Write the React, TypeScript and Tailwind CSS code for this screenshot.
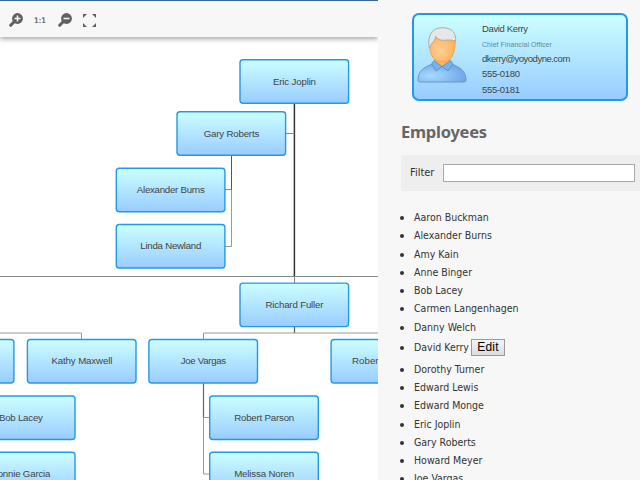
import React from "react";

type Person = { name: string; x: number; y: number; w: number };

const people: Person[] = [
  { name: "Eric Joplin", x: 240, y: 59.7, w: 43 },
  { name: "Gary Roberts", x: 177, y: 111.8, w: 55.5 },
  { name: "Alexander Burns", x: 116.3, y: 168.2, w: 68 },
  { name: "Linda Newland", x: 116.3, y: 224.5, w: 61 },
  { name: "Richard Fuller", x: 240, y: 283.1, w: 58 },
  { name: "", x: -94.7, y: 339.5, w: 0 },
  { name: "Kathy Maxwell", x: 27.4, y: 339.5, w: 61 },
  { name: "Joe Vargas", x: 148.9, y: 339.5, w: 45.5 },
  { name: "Robert Lorenzo", x: 331.1, y: 339.5, w: 67 },
  { name: "Bob Lacey", x: -33.6, y: 396, w: 44 },
  { name: "Bonnie Garcia", x: -33.6, y: 452.3, w: 59 },
  { name: "Robert Parson", x: 209.7, y: 396, w: 60 },
  { name: "Melissa Noren", x: 209.7, y: 452.3, w: 60 },
];

const edges: { d: string; c: string; w: number }[] = [
  { d: "M294.4 103V276.5", c: "#333", w: 1.5 },
  { d: "M294.5 276V283", c: "#888", w: 1 },
  { d: "M286 133.5H294.5", c: "#888", w: 1 },
  { d: "M231.5 155V190", c: "#555", w: 1 },
  { d: "M231.5 190V246.5H225", c: "#999", w: 1 },
  { d: "M225 189.5H231.5", c: "#888", w: 1 },
  { d: "M0 276.5H378", c: "#888", w: 1 },
  { d: "M294.5 327V333", c: "#555", w: 1.2 },
  { d: "M203.5 340V333H378", c: "#999", w: 1 },
  { d: "M0 333H81.5V340", c: "#999", w: 1 },
  { d: "M203.5 383V417.5", c: "#666", w: 1.2 },
  { d: "M203.5 417V474H210M203.5 417.5H210", c: "#999", w: 1 },
];

function Chart() {
  return (
    <svg width="378" height="480" className="block" fontFamily="'Liberation Sans', Arial, sans-serif">
      <defs>
        <linearGradient id="node" x2="0" y2="1">
          <stop stopColor="#ccffff" />
          <stop offset="1" stopColor="#99ccff" />
        </linearGradient>
      </defs>
      {edges.map((e) => (
        <path key={e.d} d={e.d} fill="none" stroke={e.c} strokeWidth={e.w} />
      ))}
      {people.map((p, i) => (
        <g key={i}>
          <rect x={p.x} y={p.y} width="108.6" height="43.5" rx="3" fill="url(#node)" stroke="#2299e8" strokeWidth="1.4" />
          {p.name && (
            <text x={p.x + 54.5} y={p.y + 24.9} fontSize="9.7" textAnchor="middle" textLength={p.w} fill="#444">
              {p.name}
            </text>
          )}
        </g>
      ))}
    </svg>
  );
}

function Zoom({ plus }: { plus?: boolean }) {
  return (
    <svg width="14" height="14" viewBox="0 0 14 14" className="block">
      <path d="M5.5 8.5 1.7 12.3" stroke="#606060" strokeWidth="3" strokeLinecap="round" />
      <circle cx="8.5" cy="5.5" r="5.4" fill="#606060" />
      <path d={plus ? "M5.5 5.5h6M8.5 2.5v6" : "M5.5 5.5h6"} stroke="#f5f5f5" strokeWidth="1.6" />
    </svg>
  );
}

function Toolbar() {
  return (
    <div className="absolute inset-x-0 top-0 flex h-[37px] items-start border-t border-[#336699] bg-[#f7f7f7] pl-[9px] pt-[12px] shadow-[0_2px_5px_rgba(0,0,0,0.35)]">
      <Zoom plus />
      <span className="ml-[11px] mt-[3px] w-[13px] whitespace-nowrap font-['DejaVu_Sans',sans-serif] text-[7.5px] leading-[10px] text-[#555] [-webkit-text-stroke:0.2px_#555]">1:1</span>
      <div className="ml-[11px]"><Zoom /></div>
      <svg width="13" height="13" viewBox="0 0 13 13" className="ml-[11px] mt-px" fill="#606060">
        <path d="M0 0h4L0 4zM9 0h4v4zM0 9v4h4zM13 9v4H9z" />
      </svg>
    </div>
  );
}

function Avatar() {
  return (
    <svg width="50" height="57" viewBox="0 0 50 57" className="block">
      <defs>
        <radialGradient id="face" cx=".42" cy=".6" r=".65">
          <stop stopColor="#ffd097" />
          <stop offset="1" stopColor="#ffad50" />
        </radialGradient>
        <radialGradient id="shirt" cx=".28" cy=".65" r=".75">
          <stop stopColor="#a6dcff" />
          <stop offset="1" stopColor="#6fa5e8" />
        </radialGradient>
      </defs>
      <path d="M1 53C1 45 6 40 16 37L25 39 34 37C44 40 49 45 49 53Q49 55 47 55H3Q1 55 1 53Z" fill="url(#shirt)" stroke="#6c95c9" />
      <path d="M17 30V38Q25 42 33.5 38V30Z" fill="#ffb45c" />
      <path d="M12.5 17C12.3 28 17 34.7 25.3 34.7S38.5 28 38.3 13L30 7H18Z" fill="url(#face)" stroke="#e8a052" strokeWidth=".8" />
      <path d="M17 33.5 14.5 37 19 44 25 39.5ZM33.5 33.5 36 37 31 44 25 39.5Z" fill="#75b2ed" stroke="#518dcb" strokeWidth=".8" />
      <path d="M12 20.5C10.5 8 15 .7 25.5 .7S39 7 38.7 14Q34 12.5 30 13Q22 14.5 18.8 9.5Q18.5 12 16.5 14.5Q13.5 17 13 20.5Z" fill="#e7e7e7" stroke="#a6a6a6" strokeWidth=".9" />
    </svg>
  );
}

function Card() {
  return (
    <div className="ml-[34px] flex h-[88px] w-[216px] rounded-[7px] border-[2.5px] border-[#2299e8] bg-linear-to-b from-[#ccffff] to-[#99ccff]">
      <div className="ml-[3px] mt-[12px]"><Avatar /></div>
      <div className="ml-[15px] mt-[6px] whitespace-nowrap font-['Liberation_Sans',Arial,sans-serif] text-[9.5px] leading-[15px] text-[#444]">
        <div className="tracking-[-0.36px]">David Kerry</div>
        <div className="h-[15px] text-[7px] leading-[17px] tracking-[0.05px] text-[#6088a0]">Chief Financial Officer</div>
        <div className="tracking-[-0.5px]">dkerry@yoyodyne.com</div>
        <div className="tracking-[-0.3px]">555-0180</div>
        <div className="mt-px tracking-[-0.3px]">555-0181</div>
      </div>
    </div>
  );
}

const employees = ["Aaron Buckman", "Alexander Burns", "Amy Kain", "Anne Binger", "Bob Lacey", "Carmen Langenhagen", "Danny Welch", "David Kerry", "Dorothy Turner", "Edward Lewis", "Edward Monge", "Eric Joplin", "Gary Roberts", "Howard Meyer", "Joe Vargas"];

function Row({ name }: { name: string }) {
  const editable = name === "David Kerry";
  return (
    <li className={"flex whitespace-nowrap " + (editable ? "h-[24px] items-start pt-[2px]" : "h-[18.25px] items-center")}>
      <span className={"mr-[10px] size-[4px] rounded-full bg-[#333] " + (editable ? "mt-[8px]" : "mt-[2px]")} />
      <span>{name}</span>
      {editable && (
        <button className="ml-[2px] mt-px flex h-[17px] w-[34px] items-center justify-center border border-[#999] bg-linear-to-b from-[#f4f4f4] to-[#dddddd] font-['Liberation_Sans',Arial,sans-serif] text-[12px] tracking-[0.2px] text-black">Edit</button>
      )}
    </li>
  );
}

export default function App() {
  return (
    <div className="flex h-[480px] w-[640px] overflow-hidden bg-white">
      <main className="relative h-[480px] w-[378px] shrink-0 overflow-hidden">
        <Chart />
        <Toolbar />
      </main>
      <aside className="h-[480px] w-[262px] shrink-0 overflow-hidden bg-[#f7f7f7] pt-[13px] font-['DejaVu_Sans_Condensed','DejaVu_Sans',Tahoma,sans-serif] text-[#333] [font-stretch:condensed]">
        <Card />
        <h2 className="ml-[23px] mt-[21px] h-[20px] font-['Noto_Sans',sans-serif] text-[16.5px] font-bold leading-[20px] tracking-[-0.25px] text-[#666] [font-stretch:normal]">Employees</h2>
        <div className="ml-[23px] mt-[13px] flex h-[36px] items-center bg-[#eeeeee] pl-[9px]">
          <label className="w-[33px] text-[11px]">Filter</label>
          <input className="h-[18px] w-[192px] border border-[#a9a9a9] bg-white outline-none" />
        </div>
        <ul className="ml-[22px] mt-[17px] text-[10.5px] leading-[18px]">
          {employees.map((n) => <Row key={n} name={n} />)}
        </ul>
      </aside>
    </div>
  );
}
